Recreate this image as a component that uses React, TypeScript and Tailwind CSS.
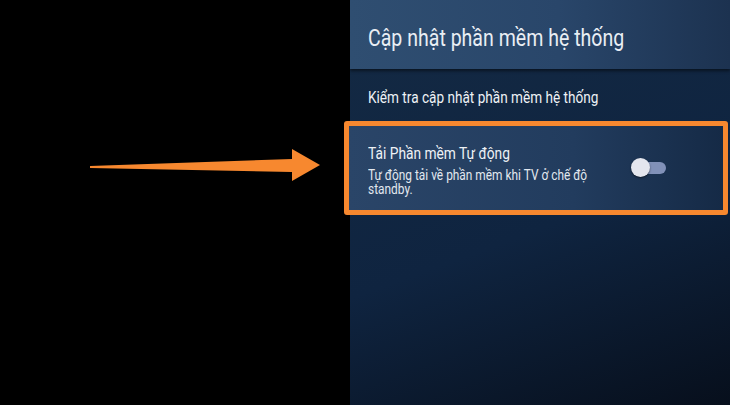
export default function App() {
  return (
    <div className="flex h-[405px] w-[730px] overflow-hidden bg-black font-['Roboto',sans-serif]">
      <div className="w-[350px] shrink-0">
        <svg width="350" height="405" viewBox="0 0 350 405">
          <polygon points="90,166 292,159 292,149 320,165 292,181 292,172 90,168" fill="#f7882f" />
        </svg>
      </div>
      <div className="flex w-[380px] min-w-0 shrink-0 flex-col bg-[linear-gradient(160deg,#142a44_0%,#0f2440_55%,#070f1c_100%)]">
        <div className="h-[69px] bg-[linear-gradient(90deg,#2f4e71_0%,#29466a_55%,#1c3250_100%)] pl-[18px] pt-[25px] shadow-[0_2px_3px_rgba(0,0,0,0.5)]">
          <h1 className="origin-left scale-x-[0.85] whitespace-nowrap text-[23px] leading-[27px] text-[#e9eef4]">Cập nhật phần mềm hệ thống</h1>
        </div>
        <div className="h-[52px] pl-[18px] pt-[19px]">
          <div className="origin-left scale-x-[0.85] whitespace-nowrap text-[16px] leading-[20px] text-[#eef2f6]">Kiểm tra cập nhật phần mềm hệ thống</div>
        </div>
        <div className="-ml-[6px] mr-[2px] h-[94px] rounded-[3px] border-[5px] border-[#f7882f] bg-[linear-gradient(90deg,#2a4568_0%,#223c5e_60%,#152a46_100%)]">
          <div className="flex h-full items-start pl-[19px] pr-[57px] pt-[18px]">
            <div className="min-w-0 flex-1">
              <div className="origin-left scale-x-[0.86] whitespace-nowrap text-[16px] leading-[20px] text-[#eef2f6]">Tải Phần mềm Tự động</div>
              <div className="mt-[5px] w-[262px] origin-left scale-x-[0.85] text-[14px] leading-[13.5px] text-[#e2e8ef]">Tự động tải về phần mềm khi TV ở chế độ standby.</div>
            </div>
            <div className="relative mt-[18px] h-[12px] w-[34px] shrink-0 rounded-full bg-[#8191b8]">
              <div className="absolute -left-[1px] -top-[4px] h-[19px] w-[19px] rounded-full bg-[#e4e6ee] shadow-[0_1px_2px_rgba(0,0,0,0.5)]" />
            </div>
          </div>
        </div>
      </div>
    </div>
  )
}
